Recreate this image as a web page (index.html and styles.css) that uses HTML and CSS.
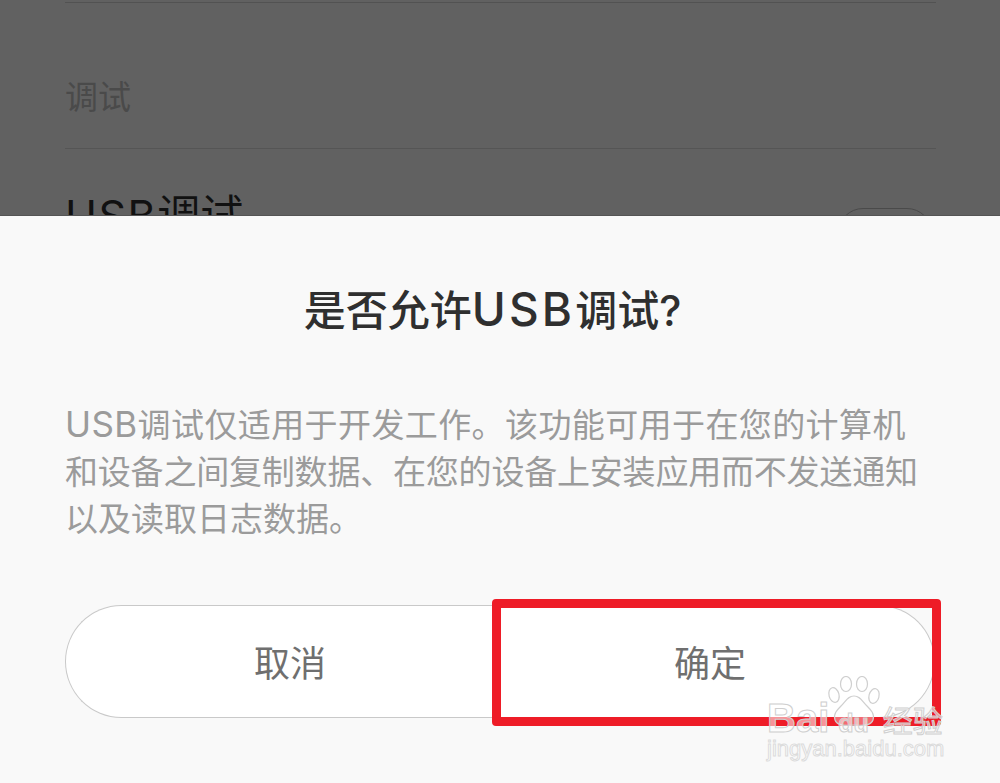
FILE: index.html
```html
<!DOCTYPE html>
<html lang="zh-CN">
<head>
  <meta charset="UTF-8" />
  <meta name="viewport" content="width=device-width, initial-scale=1.0" />
  <title>USB调试</title>
  <link rel="stylesheet" href="styles.css">
</head>
<body>
  <div class="page">
    <!-- Dimmed settings list behind the dialog -->
    <div class="settings">
      <div class="section-label">调试</div>
      <div class="row">
        <span class="row-title"><span class="latin">USB</span>调试</span>
        <span class="switch"></span>
      </div>
    </div>

    <!-- Bottom dialog -->
    <div class="dialog">
      <h2 class="dialog-title">是否允许<span class="latin">USB</span>调试?</h2>
      <div class="dialog-text">
        <div class="line-first"><span class="latin">USB</span>调试仅适用于开发工作。该功能可用于在您的计算机</div>
        <div class="line-second">和设备之间复制数据、在您的设备上安装应用而不发送通知</div>
        <div>以及读取日志数据。</div>
      </div>
      <div class="actions">
        <button class="btn btn-left">取消</button>
        <button class="btn btn-right">确定</button>
      </div>
    </div>

    <!-- Red highlight drawn over the screenshot -->
    <div class="highlight"></div>

    <!-- Watermark -->
    <div class="watermark">
      <svg class="paw" viewBox="0 0 54 52" width="54" height="52">
        <g fill="rgba(255,255,255,0.35)" stroke="#cfcfcf" stroke-width="1.2">
          <ellipse cx="7" cy="19" rx="5" ry="7.5" transform="rotate(-15 7 19)" />
          <ellipse cx="19" cy="8" rx="5.5" ry="7.5" />
          <ellipse cx="35" cy="8" rx="5.5" ry="7.5" />
          <ellipse cx="47" cy="20" rx="5" ry="7.5" transform="rotate(15 47 20)" />
          <path d="M27 20c-6 0-8 5-13 10-4 4-8 8-6 14 2 6 10 6 19 5 9 1 17 1 19-5 2-6-2-10-6-14-5-5-7-10-13-10z" />
        </g>
      </svg>
      <div class="wm-brand"><span class="wm-bai">Bai</span><span class="wm-du">du</span><span class="wm-cn">经验</span></div>
      <div class="wm-url">jingyan.baidu.com</div>
    </div>
  </div>
</body>
</html>
```

FILE: styles.css
```css
* {
  box-sizing: border-box;
}

body {
  margin: 0;
  font-family: Inter, "Noto Sans CJK SC", sans-serif;
}

.page {
  position: relative;
  width: 1000px;
  height: 783px;
  overflow: hidden;
  display: flex;
  flex-direction: column;
  background-color: #f9f9f9;
}

/* settings list */
.settings {
  height: 216px;
  flex-shrink: 0;
  overflow: hidden;
  margin: 0;
  padding: 2px 64px 0 65px;
  background-color: #616161;
  border-bottom: 1px solid #555;
}

.section-label {
  height: 147px;
  padding-top: 71px;
  font-size: 33px;
  line-height: 46px;
  color: #4a4a4a;
  border-top: 1px solid #525252;
  border-bottom: 1px solid #555;
}

.row {
  display: flex;
  justify-content: space-between;
  padding-top: 39px;
}

.row-title {
  font-size: 43px;
  line-height: 54px;
  color: #111;
}

.row-title .latin {
  letter-spacing: 1.5px;
}

.switch {
  width: 94px;
  height: 50px;
  margin: 20px 4px 0 0;
  border: 1px solid #4a4a4a;
  border-radius: 25px;
}

/* dialog */
.dialog {
  flex: 1;
  padding: 69px 65px 0;
  background-color: #f9f9f9;
}

.dialog-title {
  margin: 0;
  padding-right: 15px;
  font-size: 42px;
  line-height: 48px;
  font-weight: 500;
  text-align: center;
  color: #2f2f2f;
}

.dialog-title .latin {
  font-size: 46px;
  line-height: 48px;
  letter-spacing: 3.2px;
}

.dialog-text {
  margin: 66px 0 0;
  font-size: 33px;
  line-height: 47px;
  white-space: nowrap;
  color: #9b9b9b;
}

.dialog-text .latin {
  font-size: 35px;
  line-height: 47px;
}

.line-first {
  letter-spacing: 0.4px;
}

.line-second {
  letter-spacing: -0.2px;
}

.actions {
  display: flex;
  width: 870px;
  margin-top: 62px;
}

.btn {
  flex: 1;
  height: 113px;
  font-family: inherit;
  font-size: 36px;
  color: #6f6f6f;
  background-color: #fff;
  border: 1px solid #c9c9c9;
}

.btn-left {
  padding: 0 0 2px 14px;
  border-right: none;
  border-radius: 57px 0 0 57px;
}

.btn-right {
  padding: 0 14px 2px 0;
  border-left: none;
  border-radius: 0 57px 57px 0;
}

/* overlays */
.highlight {
  position: absolute;
  left: 492px;
  top: 599px;
  width: 449px;
  height: 127px;
  border: 9px solid #ee1c27;
  border-radius: 4px;
}

.watermark {
  position: absolute;
  left: 767px;
  top: 676px;
  width: 180px;
  height: 88px;
  color: rgba(255, 255, 255, 0.55);
}

.paw {
  position: absolute;
  left: 60px;
  top: 0;
}

.wm-brand {
  position: absolute;
  left: 0;
  top: 20px;
  display: flex;
  align-items: baseline;
  font-family: "Liberation Sans", "Noto Sans CJK SC", sans-serif;
  font-weight: 700;
  -webkit-text-stroke: 1px #cfcfcf;
}

.wm-bai {
  font-size: 40px;
  line-height: 44px;
}

.wm-du {
  margin-left: 9px;
  font-size: 25px;
}

.wm-cn {
  margin-left: 14px;
  font-size: 30px;
  font-weight: 400;
}

.wm-url {
  position: absolute;
  left: 0;
  top: 58px;
  font-family: "Liberation Sans", sans-serif;
  font-size: 22px;
  line-height: 30px;
  white-space: nowrap;
  -webkit-text-stroke: 1px #dcdcdc;
}
```
